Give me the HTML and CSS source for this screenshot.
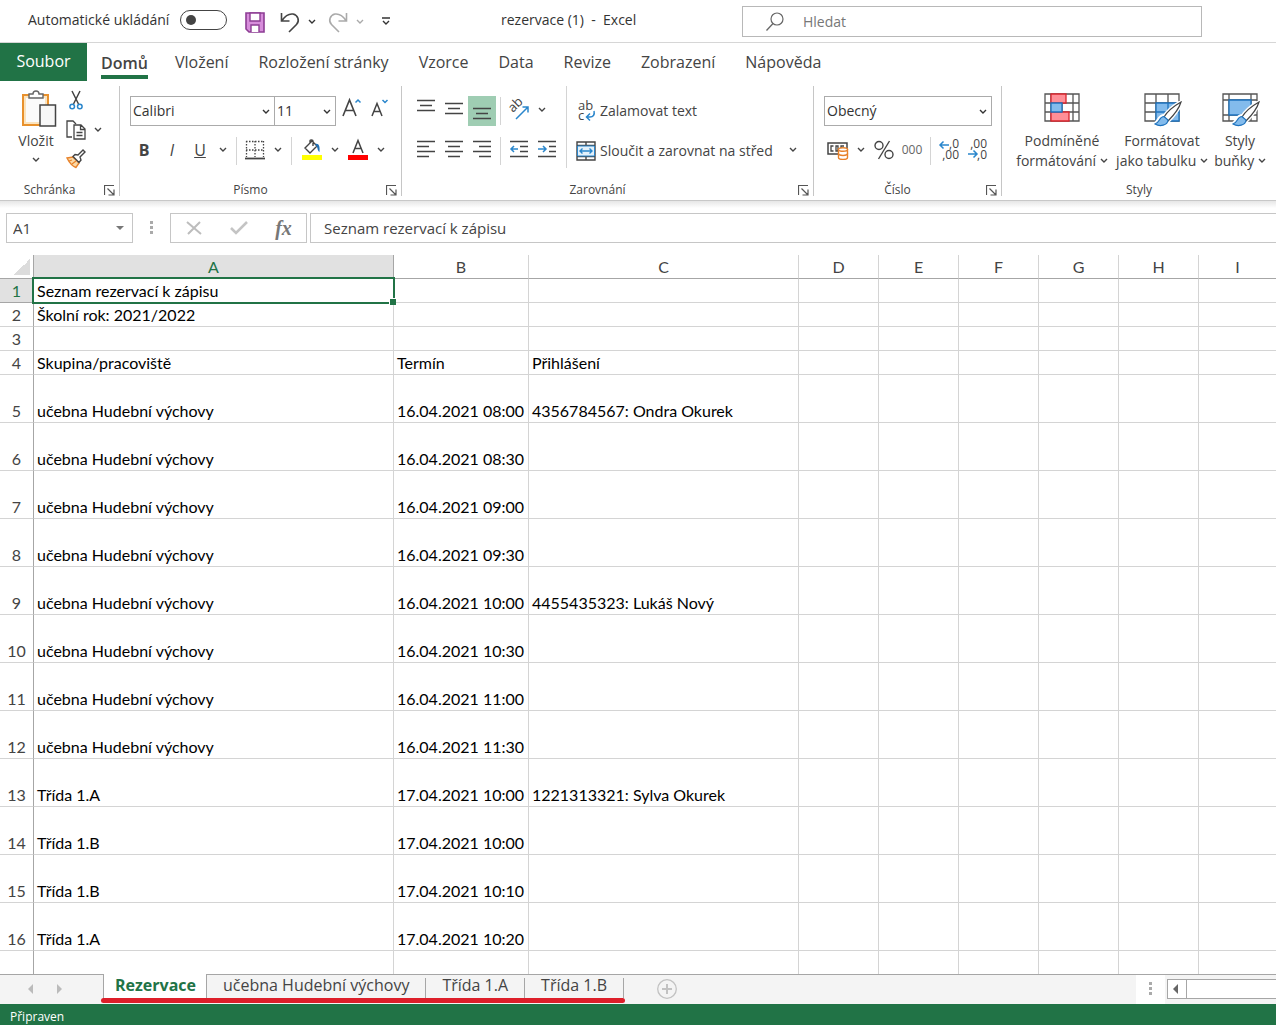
FILE: index.html
```html
<!DOCTYPE html>
<html lang="cs">
<head>
<meta charset="utf-8">
<title>rezervace (1) - Excel</title>
<link rel="stylesheet" href="styles.css">
</head>
<body>
<svg class="defs" aria-hidden="true">
  <symbol id="chev" viewBox="0 0 8 6"><path d="M1 1l3 3 3-3" fill="none" stroke="currentColor" stroke-width="1.4"/></symbol>
  <symbol id="launch" viewBox="0 0 11 11"><path d="M.5 10V.5H10M3.5 3.5l6 6M10 4.5V10H4.500" fill="none" stroke="#555" stroke-width="1.2"/></symbol>
  <symbol id="brush" viewBox="0 0 28 26"><path d="M27 1C20 5 13 11 10 16l4 4C19 15 25 8 27 1z" fill="#fff" stroke="#fff" stroke-width="4"/><path d="M10 15c-5 0-5 6-9 8 5 3 13 2 13-4z" fill="#83bbec" stroke="#fff" stroke-width="4"/><path d="M27 1C20 5 13 11 10 16l4 4C19 15 25 8 27 1z" fill="#fff" stroke="#444" stroke-width="1.2"/><path d="M10 15.500c-5 0-4 6-9 7.500 5 3 12.500 1.500 13-4z" fill="#83bbec" stroke="#1e73be" stroke-width="1.200"/></symbol>
</svg>

<header class="titlebar">
  <div class="quick">
    <label for="autosave">Automatické ukládání</label>
    <input type="checkbox" id="autosave" class="toggle">
    <button class="q save" aria-label="Uložit"><svg width="20" height="21" viewBox="0 0 20 21"><path d="M1 1h18v19H4l-3-3z" fill="#d78ddb" stroke="#8d3d94" stroke-width="1.600"/><path d="M5 1h10v8H5z" fill="#fff" stroke="#8d3d94" stroke-width="1.400"/><path d="M6 20v-7h8v7" fill="#fff" stroke="#8d3d94" stroke-width="1.400"/></svg></button>
    <button class="q" aria-label="Zpět"><svg width="20" height="21" viewBox="0 0 20 21"><path d="M1.500 1v8h8M2 8.500C5 4 9 1.500 13 2c5 1 7 7 3.500 10.500L9 20" fill="none" stroke="#444" stroke-width="1.600"/></svg></button>
    <button class="qc" aria-label="Zpět – možnosti"><svg class="chev"><use href="#chev"/></svg></button>
    <button class="q off" aria-label="Znovu"><svg width="20" height="21" viewBox="0 0 20 21"><path d="M18.500 1v8h-8M18 8.500C15 4 11 1.500 7 2 2 3 0 9 3.500 12.500L11 20" fill="none" stroke="currentColor" stroke-width="1.600"/></svg></button>
    <button class="qc off" aria-label="Znovu – možnosti"><svg class="chev"><use href="#chev"/></svg></button>
    <button class="qc custom" aria-label="Přizpůsobit panel"><svg width="10" height="9" viewBox="0 0 10 9"><path d="M1 1h8M2 4l3 3 3-3" fill="none" stroke="#333" stroke-width="1.400"/></svg></button>
  </div>
  <div class="doc">rezervace (1) &nbsp;- &nbsp;Excel</div>
  <div class="search">
    <svg width="18" height="19" viewBox="0 0 18 19"><circle cx="11" cy="7" r="6" fill="none" stroke="#666" stroke-width="1.200"/><path d="M7 11.500l-6.500 7" stroke="#666" stroke-width="1.300"/></svg>
    <input type="search" placeholder="Hledat" aria-label="Hledat">
  </div>
</header>

<nav class="tabs">
  <button class="file">Soubor</button>
  <button class="on">Domů</button>
  <button>Vložení</button>
  <button>Rozložení stránky</button>
  <button>Vzorce</button>
  <button>Data</button>
  <button>Revize</button>
  <button>Zobrazení</button>
  <button>Nápověda</button>
</nav>

<section class="ribbon">
  <div class="group g-clip">
    <div class="body">
      <button class="paste"><svg width="42" height="38" viewBox="-6 0 42 38"><path d="M2 5h25v30H2z" fill="#fff" stroke="#e8912d" stroke-width="2"/><path d="M4 7h21v26H4z" fill="#fbfbfb" stroke="#fbe3bd" stroke-width="2"/><path d="M8 8V4h4c0-4 6-4 6 0h4v4z" fill="#fff" stroke="#666" stroke-width="1.400"/><path d="M19 15h15.500v21H19z" fill="#f7f7f7" stroke="#444" stroke-width="1.500"/></svg><span>Vložit</span><svg class="chev"><use href="#chev"/></svg></button>
      <div class="stack">
        <button aria-label="Vyjmout"><svg width="14" height="19" viewBox="0 0 14 19"><path d="M3 0l6.500 13M11 0L4.500 13" stroke="#444" stroke-width="1.500"/><g fill="#fff" stroke="#2a86cc" stroke-width="1.500"><circle cx="3.200" cy="15.500" r="2.300"/><circle cx="10.800" cy="15.500" r="2.300"/></g></svg></button>
        <div class="pair"><button aria-label="Kopírovat"><svg width="20" height="20" viewBox="0 0 20 20"><path d="M6 17H1V1h6l3 3" fill="none" stroke="#444" stroke-width="1.300"/><path d="M8 5h7l4 4v10H8zM14.500 5v4.500H19M10.500 12.500h6M10.500 15.500h6" fill="#fff" stroke="#444" stroke-width="1.300"/></svg></button><button aria-label="Kopírovat – možnosti"><svg class="chev"><use href="#chev"/></svg></button></div>
        <button aria-label="Kopírovat formát"><svg width="20" height="19" viewBox="0 0 20 19"><path d="M1 9l6-1 6 6-3 4.500C6 17 3 13 1 9z" fill="#fbd9a6" stroke="#e8822a" stroke-width="1.400"/><path d="M3 12l3-1M6 15l4-3" stroke="#e8822a" stroke-width="1.200"/><path d="M7 7.500l2-2 3 .5 5-5 2 2-5 5 1 3-2 2.500z" fill="#fff" stroke="#444" stroke-width="1.400"/></svg></button>
      </div>
    </div>
    <footer><span>Schránka</span><button aria-label="Schránka – nastavení"><svg width="11" height="11"><use href="#launch"/></svg></button></footer>
  </div>

  <div class="group g-font">
    <div class="body rows">
      <div class="row">
        <div class="combo w-font"><select aria-label="Písmo"><option>Calibri</option></select><svg class="chev"><use href="#chev"/></svg></div>
        <div class="combo w-size"><select aria-label="Velikost písma"><option>11</option></select><svg class="chev"><use href="#chev"/></svg></div>
        <button class="t" aria-label="Zvětšit písmo"><svg width="20" height="24" viewBox="0 0 20 24"><path d="M1 18L7.500 2 14 18M3.500 12.500h8" fill="none" stroke="#444" stroke-width="1.600"/><path d="M13.500 4.500l2.500-2.500 2.500 2.500" fill="none" stroke="#2a86cc" stroke-width="1.500"/></svg></button>
        <button class="t" aria-label="Zmenšit písmo"><svg width="20" height="24" viewBox="1 0 20 24"><path d="M3 18L8 5.500 13 18M5 13.500h6" fill="none" stroke="#444" stroke-width="1.500"/><path d="M13.500 2l2.500 2.500L18.500 2" fill="none" stroke="#2a86cc" stroke-width="1.500"/></svg></button>
      </div>
      <div class="row">
        <button class="t"><b>B</b></button><button class="t"><i>I</i></button><button class="t"><u>U</u></button><button class="c" aria-label="Podtržení"><svg class="chev"><use href="#chev"/></svg></button>
        <span class="sep"></span>
        <button class="t" aria-label="Ohraničení"><svg width="20" height="20" viewBox="0 0 20 20"><path d="M1 1.500h18M1 10h18M1.500 1v16M10 1v16M18.500 1v16" stroke="#444" stroke-width="1.300" stroke-dasharray="1.500 1.500"/><path d="M0 18.500h20" stroke="#444" stroke-width="1.800"/></svg></button><button class="c" aria-label="Ohraničení – možnosti"><svg class="chev"><use href="#chev"/></svg></button>
        <span class="sep"></span>
        <button class="t fill" aria-label="Barva výplně"><svg width="20" height="20" viewBox="0 0 20 20"><path d="M3 8l7-7 5 5-7 7zM8 4V1c0-1.500 3-1.500 3 0v5" fill="#fff" stroke="#444" stroke-width="1.400"/><path d="M13 4c4-1 5 2 4.500 8-2-1-2-5-3-6z" fill="#1f6fb5"/><path d="M0 15h20v5H0z" fill="#ff0"/></svg></button><button class="c" aria-label="Barva výplně – možnosti"><svg class="chev"><use href="#chev"/></svg></button>
        <button class="t" aria-label="Barva písma"><svg width="20" height="20" viewBox="0 0 20 20"><path d="M5 13l5-12.500L15 13M7 8.500h6" fill="none" stroke="#444" stroke-width="1.500"/><path d="M0 15h20v5H0z" fill="red"/></svg></button><button class="c" aria-label="Barva písma – možnosti"><svg class="chev"><use href="#chev"/></svg></button>
      </div>
    </div>
    <footer><span>Písmo</span><button aria-label="Písmo – nastavení"><svg width="11" height="11"><use href="#launch"/></svg></button></footer>
  </div>

  <div class="group g-align">
    <div class="body">
      <div class="rows aligns">
        <div class="row">
          <button class="t" aria-label="Zarovnat nahoru"><svg class="ln" viewBox="0 0 20 20"><path d="M1 0.500h18M4 5.500h12M1 10.500h18"/></svg></button><button class="t" aria-label="Zarovnat na střed svisle"><svg class="ln" viewBox="0 0 20 20"><path d="M1 3.500h18M4 8.500h12M1 13.500h18"/></svg></button><button class="t sel" aria-label="Zarovnat dolů"><svg class="ln" viewBox="0 0 20 20"><path d="M1 8.500h18M4 13.500h12M1 18.500h18"/></svg></button>
          <span class="sep"></span>
          <button class="t" aria-label="Orientace"><svg width="22" height="22" viewBox="0 0 22 22"><text x="5" y="14" transform="rotate(-45 5 14)" class="ab">ab</text><path d="M8 20L20 8M14.500 8H20v5.500" fill="none" stroke="#2a86cc" stroke-width="1.500"/></svg></button><button class="c" aria-label="Orientace – možnosti"><svg class="chev"><use href="#chev"/></svg></button>
        </div>
        <div class="row">
          <button class="t" aria-label="Zarovnat vlevo"><svg class="ln" viewBox="0 0 20 20"><path d="M1 1.500h18M1 6.500h12M1 11.500h18M1 16.500h12"/></svg></button><button class="t" aria-label="Na střed"><svg class="ln" viewBox="0 0 20 20"><path d="M1 1.500h18M4 6.500h12M1 11.500h18M4 16.500h12"/></svg></button><button class="t" aria-label="Zarovnat vpravo"><svg class="ln" viewBox="0 0 20 20"><path d="M1 1.500h18M7 6.500h12M1 11.500h18M7 16.500h12"/></svg></button>
          <span class="sep"></span>
          <button class="t" aria-label="Zmenšit odsazení"><svg class="ln" viewBox="0 0 20 20"><path d="M1 1.500h18M11 6.500h8M11 11.500h8M1 16.500h18"/><path class="bl" d="M9 9H2M5 6L2 9l3 3"/></svg></button><button class="t" aria-label="Zvětšit odsazení"><svg class="ln" viewBox="0 0 20 20"><path d="M1 1.500h18M12 6.500h7M12 11.500h7M1 16.500h18"/><path class="bl" d="M1 9h8M6 6l3 3-3 3"/></svg></button>
        </div>
      </div>
      <div class="rows wraps">
        <div class="row"><button class="lbl"><svg width="20" height="22" viewBox="0 0 20 22"><text x="2" y="10" class="ab">ab</text><text x="2" y="20" class="ab">c</text><path d="M18 11c1 4-1 6-4 6h-3M14 13.500L10.500 17l3.500 3.500" fill="none" stroke="#2a86cc" stroke-width="1.500"/></svg>Zalamovat text</button></div>
        <div class="row"><button class="lbl"><svg width="20" height="20" viewBox="0 0 20 20"><path d="M1 1h18v18H1zM1 4.500h18M1 15.500h18M10 1v3.500M10 15.500V19" fill="#fff" stroke="#444" stroke-width="1.400"/><path d="M1.500 5h17v10h-17z" fill="#e3f1fb" stroke="#2a86cc"/><path d="M4 10h12M6.500 7.500L4 10l2.500 2.500M13.500 7.500L16 10l-2.500 2.500" fill="none" stroke="#2a86cc" stroke-width="1.400"/></svg>Sloučit a zarovnat na střed</button><button class="c end" aria-label="Sloučit – možnosti"><svg class="chev"><use href="#chev"/></svg></button></div>
      </div>
    </div>
    <footer><span>Zarovnání</span><button aria-label="Zarovnání – nastavení"><svg width="11" height="11"><use href="#launch"/></svg></button></footer>
  </div>

  <div class="group g-num">
    <div class="body rows">
      <div class="row"><div class="combo w-num"><select aria-label="Formát čísla"><option>Obecný</option></select><svg class="chev"><use href="#chev"/></svg></div></div>
      <div class="row">
        <button class="t" aria-label="Účetnický formát"><svg width="22" height="20" viewBox="0 0 22 20"><path d="M1 3h19v11H1z" fill="#fff" stroke="#444" stroke-width="1.500"/><path d="M6.500 6H4v5h2.500M9 6v5h2V6zM14 11V6h3" fill="none" stroke="#444" stroke-width="1.300"/><path d="M11.500 9.500v8c0 2.500 9 2.500 9 0v-8z" fill="#fff" stroke="#e8822a" stroke-width="1.400"/><ellipse cx="16" cy="9.500" rx="4.500" ry="1.800" fill="#fff" stroke="#e8822a" stroke-width="1.400"/><path d="M11.500 13.500c0 2.500 9 2.500 9 0" fill="none" stroke="#e8822a" stroke-width="1.500"/></svg></button><button class="c" aria-label="Účetnický formát – možnosti"><svg class="chev"><use href="#chev"/></svg></button><button class="t" aria-label="Procenta"><svg width="20" height="20" viewBox="0 0 20 20"><g fill="none" stroke="#444" stroke-width="1.400"><circle cx="5" cy="5.500" r="4"/><circle cx="15" cy="14.500" r="4"/><path d="M15.500 1L4.500 19"/></g></svg></button><button class="t zeros">000</button>
        <span class="sep"></span>
        <button class="t" aria-label="Přidat desetinné místo"><svg width="20" height="22" viewBox="0 0 20 22"><text x="20" y="9" class="dec">,0</text><text x="20" y="20" class="dec">,00</text><path d="M10 6H1M4.500 2.500L1 6l3.500 3.500" fill="none" stroke="#2a86cc" stroke-width="1.500"/></svg></button><button class="t" aria-label="Odebrat desetinné místo"><svg width="20" height="22" viewBox="0 0 20 22"><text x="20" y="9" class="dec">,00</text><text x="20" y="20" class="dec">,0</text><path d="M1 15h9M6.500 11.500L10 15l-3.500 3.500" fill="none" stroke="#2a86cc" stroke-width="1.500"/></svg></button>
      </div>
    </div>
    <footer><span>Číslo</span><button aria-label="Číslo – nastavení"><svg width="11" height="11"><use href="#launch"/></svg></button></footer>
  </div>

  <div class="group g-styles">
    <div class="body">
      <button class="big"><svg width="40" height="36" viewBox="0 0 40 36"><path d="M3 2h34v27H3zM3 11h34M3 20h34M9 2v27M31 2v27M20 2v27" fill="#fff" stroke="#555" stroke-width="1.300"/><path d="M9 2h15v9H9zM9 20h18v9H9z" fill="#ff8f97" stroke="#d9262e" stroke-width="1.300"/><path d="M9 11h11v9H9z" fill="#83bbec" stroke="#1e73be" stroke-width="1.300"/></svg><span>Podmíněné<br>formátování <svg class="chev"><use href="#chev"/></svg></span></button>
      <button class="big"><svg width="40" height="36" viewBox="0 0 40 36"><path d="M3 2h34v27H3zM3 11h34M3 20h34M14 2v27M26 2v27" fill="#fff" stroke="#555" stroke-width="1.300"/><path d="M14 11h23v18H14z" fill="#83bbec"/><path d="M14 11h23v18H14zM14 20h23M26 11v18" fill="none" stroke="#1e73be" stroke-width="1.300"/><use href="#brush" x="12" y="9" width="28" height="26"/></svg><span>Formátovat<br>jako tabulku <svg class="chev"><use href="#chev"/></svg></span></button>
      <button class="big slim"><svg width="40" height="36" viewBox="0 0 40 36"><path d="M3 2h34v27H3zM3 8h34M3 23h34M9 2v27M31 2v27" fill="#fff" stroke="#555" stroke-width="1.300"/><path d="M9 8h22v15H9z" fill="#83bbec" stroke="#1e73be" stroke-width="1.300"/><use href="#brush" x="12" y="9" width="28" height="26"/></svg><span>Styly<br>buňky <svg class="chev"><use href="#chev"/></svg></span></button>
    </div>
    <footer><span>Styly</span></footer>
  </div>
</section>

<section class="formula">
  <div class="namebox"><input value="A1" aria-label="Pole názvů"><svg width="8" height="4"><path d="M0 0h8L4 4z" fill="#777"/></svg></div>
  <span class="dots"></span>
  <div class="fx">
    <button aria-label="Zrušit"><svg width="16" height="14" viewBox="0 0 16 14"><path d="M1 1l14 12M14 1L2 13" stroke="#bdbdbd" stroke-width="2"/></svg></button>
    <button aria-label="Zadat"><svg width="18" height="14" viewBox="0 0 18 14"><path d="M1 7l5 5L17 1" fill="none" stroke="#c4c4c4" stroke-width="2.600"/></svg></button>
    <button class="fn">fx</button>
  </div>
  <input class="value" value="Seznam rezervací k zápisu" aria-label="Řádek vzorců">
</section>

<main class="grid">
  <table>
    <colgroup><col class="k-h"><col class="k-a"><col class="k-b"><col class="k-c"><col class="k-n"><col class="k-n"><col class="k-n"><col class="k-n"><col class="k-n"><col></colgroup>
    <thead><tr><th class="corner"><th class="cur">A<th>B<th>C<th>D<th>E<th>F<th>G<th>H<th>I</tr></thead>
    <tbody>
      <tr><th class="cur">1<td class="active">Seznam rezervací k zápisu<td><td><td><td><td><td><td><td></tr>
      <tr><th>2<td>Školní rok: 2021/2022<td><td><td><td><td><td><td><td></tr>
      <tr><th>3<td><td><td><td><td><td><td><td><td></tr>
      <tr><th>4<td>Skupina/pracoviště<td>Termín<td>Přihlášení<td><td><td><td><td><td></tr>
    </tbody>
    <tbody class="tall">
      <tr><th>5<td>učebna Hudební výchovy<td>16.04.2021 08:00<td>4356784567: Ondra Okurek<td><td><td><td><td><td></tr>
      <tr><th>6<td>učebna Hudební výchovy<td>16.04.2021 08:30<td><td><td><td><td><td><td></tr>
      <tr><th>7<td>učebna Hudební výchovy<td>16.04.2021 09:00<td><td><td><td><td><td><td></tr>
      <tr><th>8<td>učebna Hudební výchovy<td>16.04.2021 09:30<td><td><td><td><td><td><td></tr>
      <tr><th>9<td>učebna Hudební výchovy<td>16.04.2021 10:00<td>4455435323: Lukáš Nový<td><td><td><td><td><td></tr>
      <tr><th>10<td>učebna Hudební výchovy<td>16.04.2021 10:30<td><td><td><td><td><td><td></tr>
      <tr><th>11<td>učebna Hudební výchovy<td>16.04.2021 11:00<td><td><td><td><td><td><td></tr>
      <tr><th>12<td>učebna Hudební výchovy<td>16.04.2021 11:30<td><td><td><td><td><td><td></tr>
      <tr><th>13<td>Třída 1.A<td>17.04.2021 10:00<td>1221313321: Sylva Okurek<td><td><td><td><td><td></tr>
      <tr><th>14<td>Třída 1.B<td>17.04.2021 10:00<td><td><td><td><td><td><td></tr>
      <tr><th>15<td>Třída 1.B<td>17.04.2021 10:10<td><td><td><td><td><td><td></tr>
      <tr><th>16<td>Třída 1.A<td>17.04.2021 10:20<td><td><td><td><td><td><td></tr>
      <tr><th><td><td><td><td><td><td><td><td><td></tr>
    </tbody>
  </table>
</main>

<section class="sheets">
  <div class="arrows"><button aria-label="Předchozí list"><svg width="5" height="10"><path d="M5 0v10L0 5z" fill="#bbb"/></svg></button><button aria-label="Další list"><svg width="5" height="10"><path d="M0 0v10l5-5z" fill="#bbb"/></svg></button></div>
  <div class="list">
    <button class="on">Rezervace</button><button>učebna Hudební výchovy</button><button>Třída 1.A</button><button>Třída 1.B</button>
  </div>
  <button class="add" aria-label="Nový list"><svg width="20" height="20" viewBox="0 0 20 20"><circle cx="10" cy="10" r="9.300" fill="none" stroke="#c2c2c2" stroke-width="1.300"/><path d="M10 5v10M5 10h10" stroke="#c2c2c2" stroke-width="2"/></svg></button>
  <div class="grip"><span class="dots"></span></div>
  <div class="scroll"><button aria-label="Posunout vlevo"><svg width="5" height="10"><path d="M5 0v10L0 5z" fill="#666"/></svg></button></div>
</section>
<footer class="status">Připraven</footer>
</body>
</html>
```

FILE: styles.css
```css
* { box-sizing: border-box; }
body {
  margin: 0;
  height: 100vh;
  display: flex;
  flex-direction: column;
  overflow: hidden;
  background: #fff;
  color: #444;
  font: 14px/20px "Open Sans", "Noto Sans", sans-serif;
}
button, input, select { font: inherit; color: inherit; margin: 0; padding: 0; border: 0; background: none; border-radius: 0; }
button { display: flex; align-items: center; justify-content: center; white-space: nowrap; }
input, select { min-width: 0; outline: 0; }
svg { display: block; flex: none; overflow: visible; }
.defs { position: absolute; width: 0; height: 0; }
.chev { width: 8px; height: 6px; }

/* title bar */
.titlebar { flex: none; height: 43px; display: flex; border-bottom: 1px solid #d6d6d6; color: #333; }
.quick { flex: 0 0 501px; display: flex; align-items: center; padding: 0 0 2px 28px; }
.quick label { flex: 0 0 152px; white-space: nowrap; }
.toggle { appearance: none; width: 47px; height: 20px; border: 1px solid #444; border-radius: 10px; margin-right: 14px; }
.toggle::before { content: ""; display: block; width: 10px; height: 10px; margin: 4px 5px; border-radius: 5px; background: #444; }
.q { width: 28px; height: 28px; padding-top: 4px; }
.save { margin-right: 7px; }
.qc { width: 16px; height: 28px; padding-top: 3px; margin-right: 4px; }
.custom { width: 28px; }
.off { color: #aaa; }
.doc { flex: 0 0 241px; align-self: center; padding-bottom: 3px; }
.search { flex: 0 1 460px; height: 31px; margin-top: 6px; display: flex; align-items: center; gap: 19px; padding-left: 23px; border: 1px solid #b8b8b8; }
.search input { flex: 1; appearance: none; }
.search input::placeholder { color: #777; opacity: 1; }

/* ribbon tabs */
.tabs { flex: none; display: flex; gap: 30px; height: 38px; font-size: 16px; }
.tabs button { height: 38px; border: solid transparent; border-width: 4px 0 2px; padding-bottom: 2px; }
.tabs .file { width: 87px; border: 0; background: #217346; color: #fff; margin-right: -16px; }
.tabs .on { font-weight: 600; border: 0; margin-right: -3px; padding: 2px 0 0; box-shadow: inset 0 -2px #fff, inset 0 -6px #217346; }

/* ribbon */
.ribbon { flex: none; display: flex; height: 120px; padding-top: 5px; border-bottom: 1px solid #c8c8c8; }
.group { flex: none; display: flex; flex-direction: column; height: 110px; border-right: 1px solid #c6c6c6; }
.g-clip { width: 120px; }
.g-font { width: 282px; }
.g-align { width: 412px; }
.g-num { width: 188px; }
.g-styles { flex: 1; border: 0; }
.body { flex: 1; display: flex; min-height: 0; padding-left: 10px; }
.group footer { flex: none; display: flex; height: 12px; align-items: center; font-size: 12px; }
.group footer span { flex: 1; text-align: center; }
.group footer button { width: 20px; height: 12px; }
.rows { display: flex; flex-direction: column; gap: 10px; padding-top: 10px; }
.row { display: flex; height: 30px; align-items: center; }
.t { width: 28px; height: 30px; font-size: 16px; padding-bottom: 2px; }
.c { width: 18px; height: 30px; padding-bottom: 2px; }
.sel { background: #9fcdb3; }
.sep { width: 1px; height: 28px; margin: 0 4px; background: #d4d4d4; }
.fill { margin-left: 2px; }
.zeros { font-size: 12px; color: #666; }
.combo { position: relative; height: 30px; border: 1px solid #ababab; color: #333; }
.combo select { appearance: none; width: 100%; height: 28px; padding-left: 2px; }
.combo .chev { position: absolute; right: 4px; top: 12px; pointer-events: none; }
.w-font { width: 145px; }
.w-size { width: 62px; margin: 0 2px 0 -1px; }
.w-num { width: 168px; }
.ln { width: 20px; height: 20px; fill: none; stroke: #444; stroke-width: 1.500; }
.bl { stroke: #2a86cc; }
.ab { font-size: 13px; fill: #444; }
.dec { font-size: 12px; fill: #444; text-anchor: end; }
.paste { flex-direction: column; width: 52px; padding-top: 4px; justify-content: flex-start; }
.paste span { margin-top: 3px; }
.paste .chev { margin-top: 6px; }
.g-clip .body { gap: 4px; }
.stack { display: flex; flex-direction: column; align-items: flex-start; }
.stack button { width: 20px; height: 29px; }
.pair { display: flex; gap: 2px; }
.aligns { width: 155px; border-right: 1px solid #d4d4d4; height: 82px; }
.wraps { flex: 1; padding-left: 9px; }
.lbl { gap: 4px; }
.end { margin: 0 11px 0 auto; }
.big { flex-direction: column; width: 100px; justify-content: flex-start; padding-top: 6px; }
.big.slim { width: 56px; }
.big span { margin-top: 3px; }
.big .chev { display: inline-block; vertical-align: 2px; }

/* formula bar */
.formula { flex: none; display: flex; height: 54px; padding: 12px 0 12px 6px; background: linear-gradient(#e6e6e6, #fff 7px); font-size: 15px; }
.namebox, .fx, .value { height: 30px; border: 1px solid #c6c6c6; background: #fff; }
.namebox { width: 127px; display: flex; align-items: center; padding: 0 8px 0 6px; }
.namebox input { flex: 1; }
.dots { width: 3px; height: 13px; background: repeating-linear-gradient(#aaa 0 3px, #fff 3px 5px); }
.formula .dots { margin: 8px 17px; }
.fx { width: 137px; display: flex; margin-right: 3px; }
.fx button { flex: 1; }
.fx .fn { font: italic bold 20px/20px "Liberation Serif", serif; color: #777; }
.value { flex: 1; padding-left: 13px; border-right: 0; }

/* sheet */
.grid { flex: 1; min-height: 0; overflow: hidden; }
table { width: 100%; table-layout: fixed; border-collapse: separate; border-spacing: 0; font: 16px/20px Lato, sans-serif; color: #000; }
.k-h { width: 34px; }
.k-a { width: 360px; }
.k-b { width: 135px; }
.k-c { width: 270px; }
.k-n { width: 80px; }
th { height: 24px; padding: 0; font-weight: 400; color: #444; border: solid #d4d4d4; border-width: 0 1px 1px 0; }
thead th { border-bottom-color: #a6a6a6; }
tbody th { border-right-color: #a6a6a6; vertical-align: bottom; padding-bottom: 1px; }
td { height: 24px; padding: 0 3px 1px; border: solid #d4d4d4; border-width: 0 1px 1px 0; vertical-align: bottom; white-space: nowrap; }
tr > :last-child { border-right: 0; }
.tall th, .tall td { height: 48px; }
.cur { background: #e1e1e1; color: #217346; border-color: #a6a6a6; }
.corner { background: linear-gradient(135deg, transparent 50%, #dcdcdc 50%) 14px 4px / 16px 16px no-repeat; border-right-color: #a6a6a6; }
.active { position: relative; }
.active::before { content: ""; position: absolute; inset: -2px; border: 2px solid #217346; }
.active::after { content: ""; position: absolute; right: -3px; bottom: -3px; width: 6px; height: 6px; background: #217346; border: solid #fff; border-width: 1px 0 0 1px; }

/* sheet tabs */
.sheets { flex: none; display: flex; height: 30px; background: #f4f4f4; border-top: 1px solid #a6a6a6; }
.arrows { width: 103px; display: flex; gap: 8px; padding-left: 20px; }
.arrows button { width: 21px; height: 28px; }
.list { position: relative; display: flex; height: 24px; font-size: 16px; }
.list button { height: 20px; margin-top: 3px; padding: 0 16px 6px; border-right: 1px solid #a6a6a6; }
.list .on { height: 25px; margin-top: -1px; padding: 0 10px 3px 11px; background: #fff; border: solid #a6a6a6; border-width: 0 1px; color: #217346; font-weight: 700; }
.list::after { content: ""; position: absolute; left: -2px; right: -1px; top: 23px; height: 5px; border-radius: 3px; background: #dd1f2a; }
.add { width: 20px; height: 28px; margin-left: 33px; }
.grip { width: 29px; margin-left: auto; padding: 7px 13px; background: #fff; }
.grip .dots { display: block; }
.scroll { width: 109px; height: 20px; margin: 4px 0 0 2px; border: 1px solid #a6a6a6; border-right: 0; background: #fff; }
.scroll button { width: 19px; height: 18px; padding-right: 3px; border-right: 1px solid #a6a6a6; }
.status { flex: none; height: 21px; padding: 3px 10px 0; background: #217346; color: #fff; font-size: 12px; }
```
